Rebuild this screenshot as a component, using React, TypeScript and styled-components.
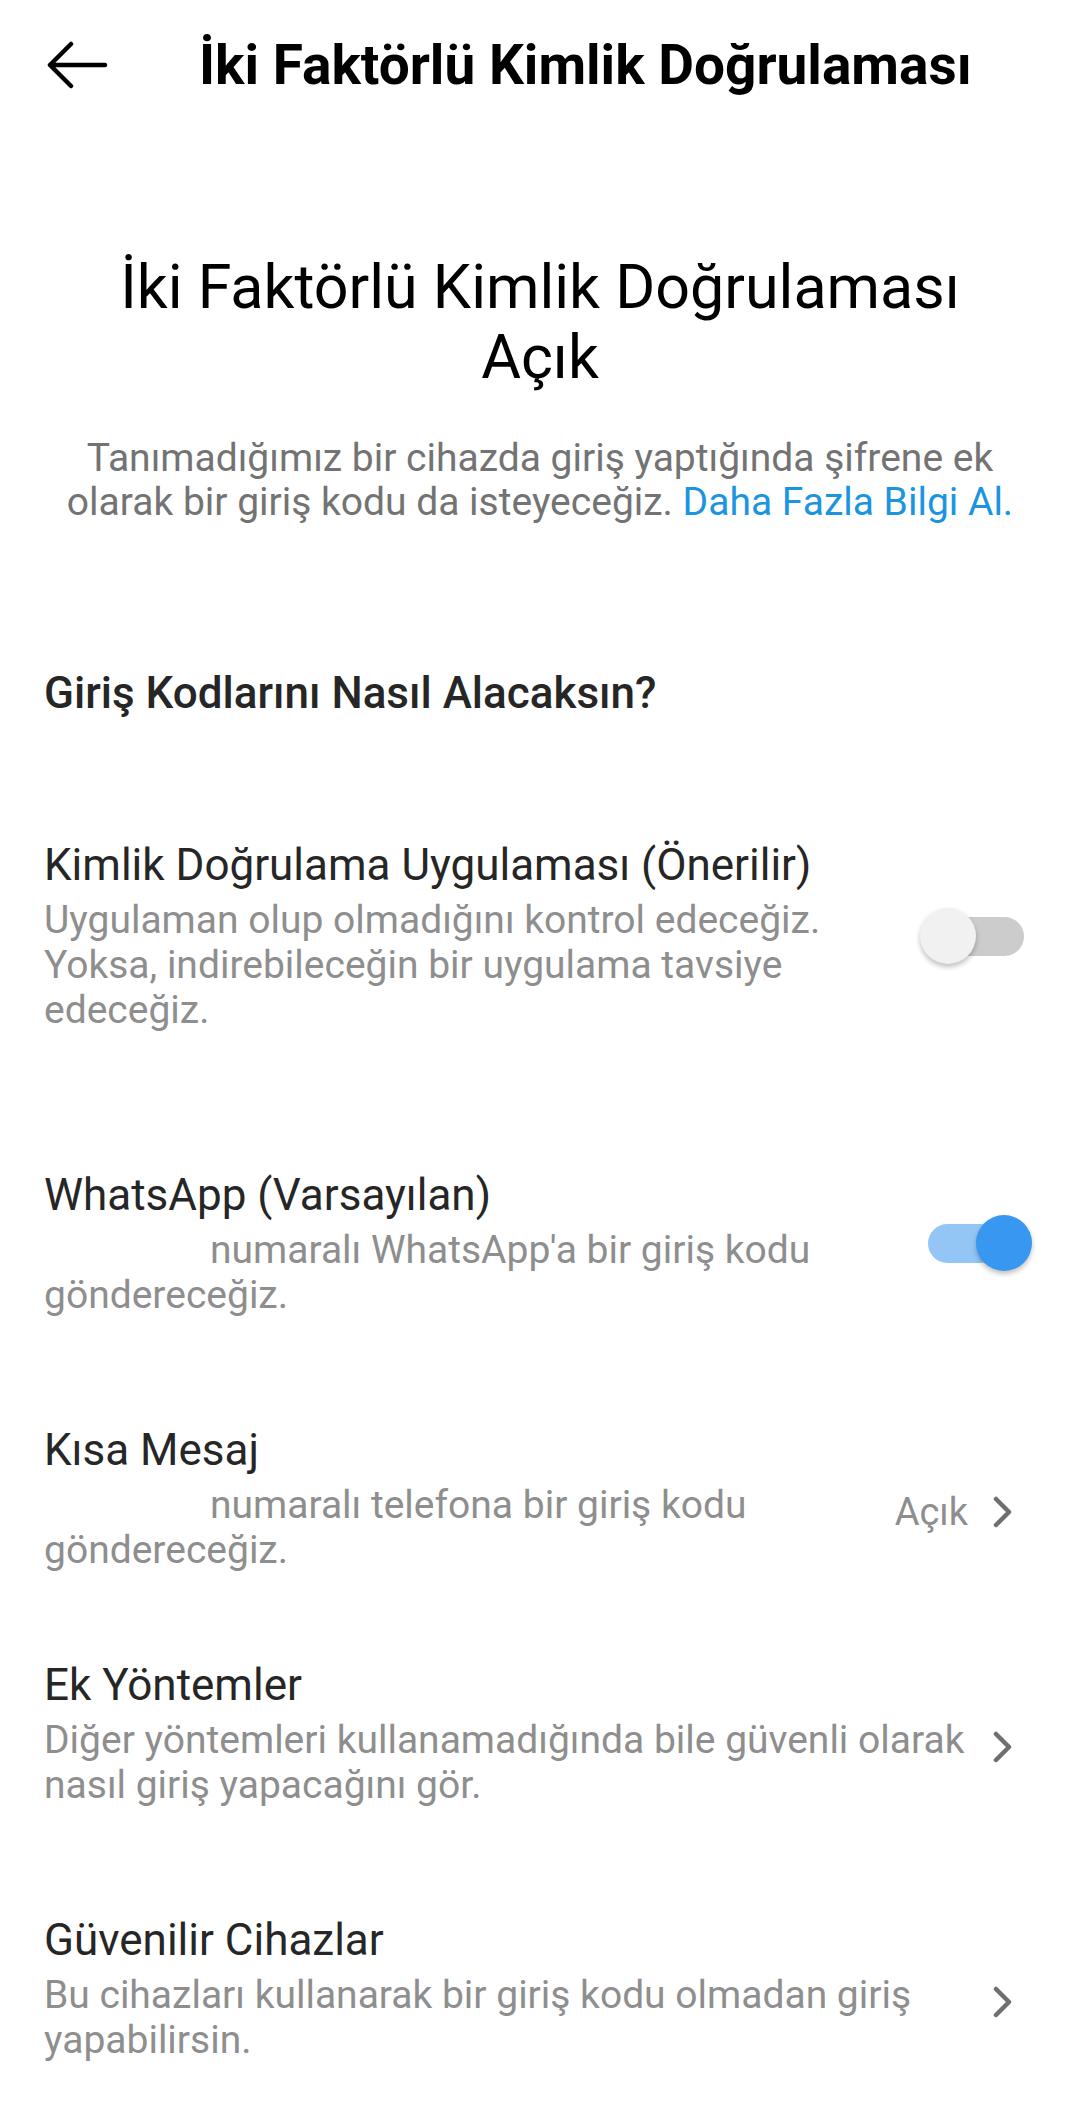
import styled, { createGlobalStyle } from "styled-components";

const GlobalStyle = createGlobalStyle`
  body {
    margin: 0;
    background: #ffffff;
    font-family: Roboto, "Noto Sans", "Liberation Sans", sans-serif;
    -webkit-font-smoothing: antialiased;
  }
`;

const Page = styled.div`
  width: 1080px;
  min-height: 2112px;
  background: #ffffff;
  padding-bottom: 40px;
`;

const Header = styled.div`
  display: flex;
  align-items: center;
  height: 130px;
`;

const BackButton = styled.div`
  width: 199px;
  padding-left: 45px;
  box-sizing: border-box;
  display: flex;
  align-items: center;
`;

const HeaderTitle = styled.div`
  font-size: 55px;
  font-weight: 700;
  color: #000000;
  line-height: 64px;
`;

const Hero = styled.div`
  margin-top: 122px;
  text-align: center;
`;

const HeroTitle = styled.div`
  font-size: 61px;
  line-height: 70px;
  color: #000000;
  padding: 0 60px;
`;

const HeroText = styled.p`
  margin: 44px 0 0;
  padding: 0 50px;
  font-size: 39px;
  line-height: 44px;
  color: #737373;
`;

const Link = styled.span`
  color: #1b95e0;
`;

const SectionTitle = styled.div`
  margin-top: 144px;
  padding: 0 44px;
  font-size: 44px;
  line-height: 50px;
  font-weight: 500;
  color: #262626;
`;

const Row = styled.div<{ $top: number }>`
  display: flex;
  align-items: center;
  margin-top: ${(p) => p.$top}px;
  padding: 0 48px 0 44px;
`;

const RowText = styled.div`
  flex: 1;
  min-width: 0;
`;

const RowTitle = styled.div`
  font-size: 44px;
  line-height: 54px;
  color: #262626;
  margin-bottom: 6px;
`;

const RowDesc = styled.div<{ $indent?: number }>`
  font-size: 39px;
  line-height: 45px;
  color: #8e8e8e;
  text-indent: ${(p) => p.$indent ?? 0}px;
`;

const Accessory = styled.div<{ $gap: number; $right: number }>`
  display: flex;
  align-items: center;
  gap: 24px;
  margin-left: ${(p) => p.$gap}px;
  margin-right: ${(p) => p.$right}px;
  margin-top: 28px;
`;

const StateLabel = styled.span`
  font-size: 38px;
  color: #8e8e8e;
`;

const Switch = styled.div<{ $on: boolean }>`
  position: relative;
  width: 112px;
  height: 60px;
  margin-left: 24px;
  flex-shrink: 0;

  &::before {
    content: "";
    position: absolute;
    left: ${(p) => (p.$on ? 8 : 20)}px;
    right: ${(p) => (p.$on ? 32 : 8)}px;
    top: 11px;
    height: 39px;
    border-radius: 20px;
    background: ${(p) => (p.$on ? "#93c6f5" : "#cccccc")};
  }

  &::after {
    content: "";
    position: absolute;
    top: 2px;
    left: ${(p) => (p.$on ? 56 : 0)}px;
    width: 56px;
    height: 56px;
    border-radius: 50%;
    background: ${(p) => (p.$on ? "#3897f0" : "#f1f1f1")};
    box-shadow: 0 3px 5px rgba(0, 0, 0, 0.25);
  }
`;

const Chevron = () => (
  <svg width="22" height="32" viewBox="0 0 22 32">
    <path d="M4 3 L17 16 L4 29" fill="none" stroke="#6f6f6f" strokeWidth="4.5" strokeLinecap="round" strokeLinejoin="round" />
  </svg>
);

const BackArrow = () => (
  <svg width="64" height="48" viewBox="0 0 64 48">
    <path d="M60 24 H5 M26 3 L5 24 L26 45" fill="none" stroke="#000" strokeWidth="4.5" strokeLinecap="round" strokeLinejoin="round" />
  </svg>
);

export default function App() {
  return (
    <>
      <GlobalStyle />
      <Page>
        <Header>
          <BackButton>
            <BackArrow />
          </BackButton>
          <HeaderTitle>İki Faktörlü Kimlik Doğrulaması</HeaderTitle>
        </Header>

        <Hero>
          <HeroTitle>
            İki Faktörlü Kimlik Doğrulaması
            <br />
            Açık
          </HeroTitle>
          <HeroText>
            Tanımadığımız bir cihazda giriş yaptığında şifrene ek olarak bir giriş kodu da isteyeceğiz.{" "}
            <Link>Daha Fazla Bilgi Al.</Link>
          </HeroText>
        </Hero>

        <SectionTitle>Giriş Kodlarını Nasıl Alacaksın?</SectionTitle>

        <Row $top={120}>
          <RowText>
            <RowTitle>Kimlik Doğrulama Uygulaması (Önerilir)</RowTitle>
            <RowDesc>
              Uygulaman olup olmadığını kontrol edeceğiz. Yoksa, indirebileceğin bir uygulama tavsiye edeceğiz.
            </RowDesc>
          </RowText>
          <Switch $on={false} />
        </Row>

        <Row $top={135}>
          <RowText>
            <RowTitle>WhatsApp (Varsayılan)</RowTitle>
            <RowDesc $indent={166}>numaralı WhatsApp'a bir giriş kodu göndereceğiz.</RowDesc>
          </RowText>
          <Switch $on={true} />
        </Row>

        <Row $top={105}>
          <RowText>
            <RowTitle>Kısa Mesaj</RowTitle>
            <RowDesc $indent={166}>numaralı telefona bir giriş kodu göndereceğiz.</RowDesc>
          </RowText>
          <Accessory $gap={24} $right={18}>
            <StateLabel>Açık</StateLabel>
            <Chevron />
          </Accessory>
        </Row>

        <Row $top={85}>
          <RowText>
            <RowTitle>Ek Yöntemler</RowTitle>
            <RowDesc>Diğer yöntemleri kullanamadığında bile güvenli olarak nasıl giriş yapacağını gör.</RowDesc>
          </RowText>
          <Accessory $gap={6} $right={18}>
            <Chevron />
          </Accessory>
        </Row>

        <Row $top={105}>
          <RowText>
            <RowTitle>Güvenilir Cihazlar</RowTitle>
            <RowDesc>Bu cihazları kullanarak bir giriş kodu olmadan giriş yapabilirsin.</RowDesc>
          </RowText>
          <Accessory $gap={6} $right={18}>
            <Chevron />
          </Accessory>
        </Row>
      </Page>
    </>
  );
}
